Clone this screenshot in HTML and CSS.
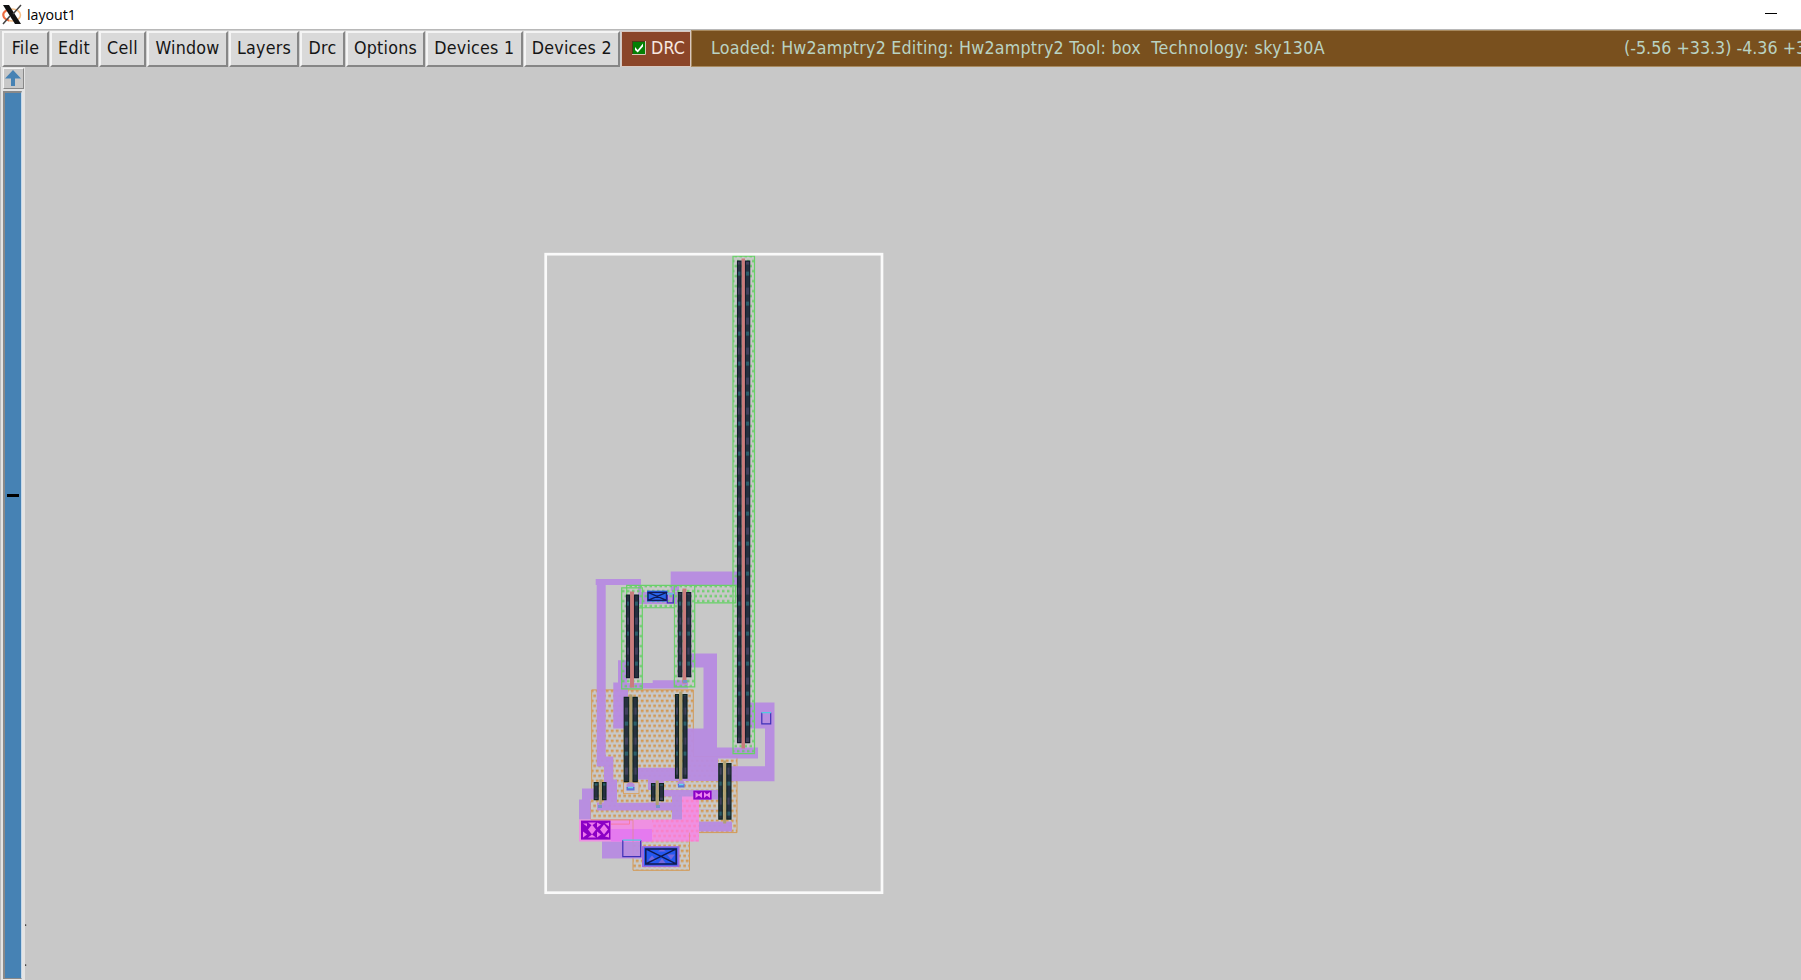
FILE: index.html
```
<!DOCTYPE html>
<html lang="en">
<head>
<meta charset="utf-8">
<title>layout1</title>
<link rel="stylesheet" href="styles.css">
</head>
<body>
<div class="window">
  <header class="titlebar">
    <svg class="logo" width="20" height="21" viewBox="0 0 20 21">
      <ellipse cx="10" cy="11" rx="8.5" ry="6" fill="none" stroke="#f6c08a" stroke-width="1.6"/>
      <path d="M7 5.5C2 6.500 0 10 2 13.500c1 1.500 3 2.500 5 3" fill="none" stroke="#ee6a42" stroke-width="2"/>
      <path d="M1 1h6l12 19h-6z" fill="#111"/>
      <path d="M19 1L11 10M8 12L1 20" stroke="#444" stroke-width="1.500"/>
    </svg>
    <span class="title">layout1</span>
    <span class="minimize"></span>
  </header>
  <nav class="toolbar">
    <button class="btn file">File</button>
    <button class="btn edit">Edit</button>
    <button class="btn cell">Cell</button>
    <button class="btn win">Window</button>
    <button class="btn layers">Layers</button>
    <button class="btn drcmenu">Drc</button>
    <button class="btn options">Options</button>
    <button class="btn devices">Devices 1</button>
    <button class="btn devices">Devices 2</button>
    <div class="drc">
      <svg width="14" height="14" viewBox="0 0 14 14"><rect x=".5" y=".5" width="13" height="13" fill="#058005" stroke="#4d3a18"/><path d="M13.500 0V13.500H0" fill="none" stroke="#d8c8b8"/><path d="M3 6l2.700 3L11 2.500v3L5.700 11.500 3 9z" fill="#fff"/></svg>
      <span>DRC</span>
    </div>
    <div class="status"><span class="msg">Loaded: Hw2amptry2 Editing: Hw2amptry2 Tool: box&nbsp; <span class="tech">Technology: sky130A</span></span><span class="coords">(-5.56 +33.3) -4.36 +3</span></div>
  </nav>
  <main class="main">
    <aside class="scroll">
      <div class="up"><svg width="18" height="18" viewBox="0 0 18 18"><path d="M9 1l8 8.500h-6V17H7V9.500H1z" fill="#4682b4"/></svg></div>
      <div class="track"><span class="mark"></span></div>
    </aside>
    <svg class="layout" viewBox="25 67.4 1776 913">
      <defs>
        <pattern id="gd" width="10" height="10" patternUnits="userSpaceOnUse" x="2" y="0"><path d="M0 1.500h2.500M5 1.500h2.500M2.500 6.500H5M7.500 6.500H10" stroke="#62cf62" stroke-width="2.200"/></pattern>
        <pattern id="od" width="5" height="10" patternUnits="userSpaceOnUse" x="593" y="695"><path d="M.3 1.300h2.600M0 6.300h.6M2.800 6.300H5" stroke="#d39a57" stroke-width="2.500"/></pattern>
        <pattern id="pd" width="5" height="10" patternUnits="userSpaceOnUse" x="593" y="695"><path d="M.3 1.300h2.600M0 6.300h.6M2.800 6.300H5" stroke="#fb80c4" stroke-width="2.300"/></pattern>
        <pattern id="bar" width="5" height="30" patternUnits="userSpaceOnUse"><rect width="5" height="30" fill="#26303f"/><path d="M2.500 2v4" stroke="#2c5f6b" stroke-width="5"/><path d="M2 18v7" stroke="#40405c" stroke-width="5"/></pattern>
      </defs>
      <path class="orange" d="M591.700 690.300H693.300V757H737V833H689.500V870.700H633V820H590.500V802H591.700z"/>
      <g class="metal">
        <path d="M595.700 579.300H641V592.500H677V604.500H638V585.500H605.700V757H613.300V780H617V803H672V797H662V790.500H648V780H637.700V768H687V729H703.500V668H691V654H717V748H758V759H718V766.700H765V729H750V703H774.500V781.700H718V800H699V810H732V832H672V811H597V803H604V767H596.700V585.500H595.700z"/>
        <path d="M670.700 572H737V585.500H679V592H670.700zM618 660.700H627V683.500H652.700V680.700H688V689H628V729H613.300V683H618zM582 789H594V800H590.700V820H579V800H582zM602 841.700H642V859H602z"/>
      </g>
      <path class="ground" d="M638 730H687V768H638zM617 782H648V803H617zM664 781.500H718V790.500H664zM699 810H732V822H699z"/>
      <path class="redot" d="M638 730H687V768H638zM617 782H648V803H617zM664 781.500H718V790.500H664zM699 810H732V822H699z"/>
      <g class="green">
        <path d="M621.700 588.300h20.600v101h-20.600zM674.300 585.700h20.400v101.600h-20.400zM626.700 585.700h47.600v22.600h-47.600zM694.700 585.700h41v17.600h-41zM733 256.500h21.500V754H733z"/>
      </g>
      <path class="clear" d="M643 609H673.700V680H643z"/>
      <g class="pink">
        <path d="M579 820H682V797H699V842H579z"/>
        <path class="hot" d="M611 829.500H652V842H611z"/>
      </g>
      <path class="pinkdots" d="M652 820H682V799H699V842H652z"/>
      <path d="M611 824.500h18.500V820" fill="none" stroke="#f77aa3"/>
      <path d="M591 820.500H633V842M689.500 842V833" fill="none" stroke="#e0886f" stroke-opacity=".6"/>
      <rect x="623.500" y="783" width="15.500" height="11" fill="#cbc5cc" stroke="#d7a365"/>
      <g class="gate">
        <path d="M630 592h4v96h-4zM682.500 589h4v95h-4zM741.500 259h3.500v490h-3.500z"/>
        <path class="weak" d="M629.300 695h3.200v93h-3.200zM679.200 692h3.200v91h-3.200zM723.200 761h3v63h-3zM599.300 780h2.500v25h-2.500zM655.700 781h3v25h-3z"/>
      </g>
      <g class="bars">
        <path d="M737.500 261.500h3.500V743h-3.500zM745.500 261.500h4.200V743h-4.200zM626.500 595.500h3v82.500h-3zM634.500 595.500h4v82.500h-4zM678.300 593h3.500v84h-3.500zM686.700 593h4v84h-4z"/>
        <path class="emerald" d="M624.200 697.800h4.500V782h-4.500zM633 697.800h4.300V782H633zM675.500 695h3v83.500h-3zM683 695h4v83.500h-4zM718.800 764h3.500v55.500h-3.500zM726.800 764h4.200v55.500h-4.200zM594.200 783h4v17h-4zM602.500 783h3.500v17h-3.500zM651.500 784h3.500v17h-3.500zM659.500 784h4v17h-4z"/>
      </g>
      <g class="cuts">
        <path d="M626.500 788v-3l2-2h4l2 2v3zM677.500 786v-3l2-2h3l2 2v3z" fill="#b58ad9"/>
        <path d="M626.500 787.500h8v3.500h-8zM678 784.500h6.500v3.500h-6.500z" fill="#5a74d8"/>
        <path d="M628 788h5M679 785h4.500" stroke="#62d9ed" stroke-width="1.500"/>
        <path d="M598 807h4M656 807h4M683 682h4" stroke="#7894c7" stroke-width="3"/>
      </g>
      <g>
        <rect x="581" y="821" width="29.500" height="19" fill="#8b00c5"/>
        <path d="M583 824h4v3zM583 838v-6l4 3zM588 830l4-5 4 5-4 5zM588 823h8l-4 3zM588 838h8l-4-3zM597 823v5l4-3zM597 838v-6l4 3zM600 830l4-5 4 5-4 5zM609 823v4l-4-3zM609 838v-5l-4 4z" fill="#ee78ed"/>
        <rect x="693.300" y="791" width="18.300" height="9" fill="#8b00c5"/>
        <path d="M695.500 792.500l4 3-4 3zM702 792.500v6l-4-3zM704 792.500l3.500 3-3.500 3zM710 792.500v6l-4-3z" fill="#ee85f1"/>
      </g>
      <g>
        <rect x="642" y="846.500" width="37.500" height="21" fill="#9b6ade"/>
        <rect x="644" y="848" width="33.500" height="18" fill="#2458ef"/>
        <path d="M648 861l4-5 4 5zM658 852l4-3 4 3zM667 855l4 5 4-5zM658 864l4-5 4 5z" fill="#7467dd"/>
        <path d="M645.800 849.300h30.400v15h-30.400zl30.400 15M676.200 849.300l-30.400 15" fill="none" stroke="#101a50" stroke-width="1.500"/>
        <rect x="647" y="591" width="20.500" height="11" fill="#2864e8"/>
        <path d="M648 592.800h18.500v8H648zl18.500 8M666.500 592.800l-18.500 8" fill="none" stroke="#101a58" stroke-width="1.300"/>
      </g>
      <g class="ports">
        <path d="M622.800 840.500V857H640.700V840.500M667.300 594.500V603.300H673.300V594.500M761.800 713V724.300H770.700V713"/>
        <path class="cyan" d="M622.500 840.500H641M667 594.300H673.500M761.500 713H771"/>
      </g>
      <rect class="box" x="545.700" y="254.600" width="336.300" height="638.500"/>
      <circle cx="25.500" cy="925.500" r=".9" fill="#444"/><circle cx="25.500" cy="965.500" r=".9" fill="#444"/>
    </svg>
  </main>
</div>
</body>
</html>
```
FILE: styles.css
```
* { box-sizing: border-box; }
body { margin: 0; background: #c8c8c8; overflow: hidden; font-family: "DejaVu Sans Condensed", "DejaVu Sans", sans-serif; font-stretch: condensed; }
.window { width: 1801px; height: 980px; display: flex; flex-direction: column; overflow: hidden; }
.titlebar { height: 29px; flex: none; display: flex; align-items: center; padding: 0 24px 0 2px; background: #fff; }
.logo { margin-top: -1px; }
.title { margin-left: 5px; font: 14.200px "Open Sans", sans-serif; color: #000; }
.minimize { width: 12px; height: 1px; margin: -2px 0 0 auto; background: #000; }
.toolbar { height: 38px; flex: none; display: flex; border-top: 1px solid #b8b8b8; padding-left: 2px; background: #d0d0d0; }
.btn { flex: none; margin: 1px 1px 0 0; padding: 0 0 3px; border: 2px solid; border-color: #f4f4f4 #868686 #868686 #f4f4f4; background: #d9d9d9; color: #151515; font: inherit; font-size: 17.700px; letter-spacing: .25px; white-space: nowrap; }
.file { width: 47px; }
.edit { width: 48px; }
.cell { width: 47px; }
.win { width: 81px; }
.layers { width: 70px; }
.drcmenu { width: 45px; }
.options { width: 79px; }
.devices { width: 96.500px; }
.drc { width: 70px; flex: none; display: flex; align-items: center; gap: 5px; margin-top: 1px; padding: 0 0 3px 10px; border: 1px solid #d8c8c0; background: #8b4528; color: #f8e8e0; font-size: 17.700px; letter-spacing: .2px; }
.status { flex: 1; min-width: 0; display: flex; align-items: center; padding: 0 0 2px 19px; border: solid #a88a60; border-width: 1px 0 1px 1px; background: #79501e; color: #b9d3c3; font-size: 17.700px; letter-spacing: .21px; white-space: pre; }
.msg { width: 913px; flex: none; }
.tech { letter-spacing: .44px; }
.coords { letter-spacing: 0; }
.main { flex: 1; display: flex; min-height: 0; }
.scroll { width: 25px; flex: none; display: flex; flex-direction: column; padding: 1px 1px 0 2px; border-left: 1px solid #bbb; background: #e4e4e4; }
.up { width: 21px; height: 21px; flex: none; border: 1px solid; border-color: #f4f4f4 #888 #888 #f4f4f4; background: #c8c8c8; }
.up svg { display: block; }
.track { width: 19px; height: 888px; flex: none; margin-top: 2px; border: solid #898989; border-width: 2px 1px 1px 2px; border-right-color: #c4d7e8; background: #4682b4; }
.mark { display: block; width: 12px; height: 3px; margin: 401px 0 0 2px; background: #000; }
.layout { display: block; width: 1776px; height: 913px; flex: none; }
.metal { fill: #b78be2; fill-opacity: .95; }
.ground, .clear { fill: #c8c8c8; }
.redot { fill: url(#od); }
.green { fill: url(#gd); stroke: #67d167; stroke-width: 1.200; }
.orange { fill: url(#od); stroke: #d39a57; stroke-width: 1; }
.pink { fill: #ef90e2; }
.hot { fill: #e57aef; }
.pinkdots { fill: url(#pd); }
.gate { fill: #c97c7c; }
.weak { fill: #b0a070; }
.bars { fill: url(#bar); stroke: #141c2c; stroke-width: 1.100; }
.emerald { stroke: #10241f; }
.ports { fill: none; stroke: #3e30b7; stroke-width: 1.200; }
.cyan { stroke: #50cbe2; }
.box { fill: none; stroke: #fafafa; stroke-width: 2.700; }
```
